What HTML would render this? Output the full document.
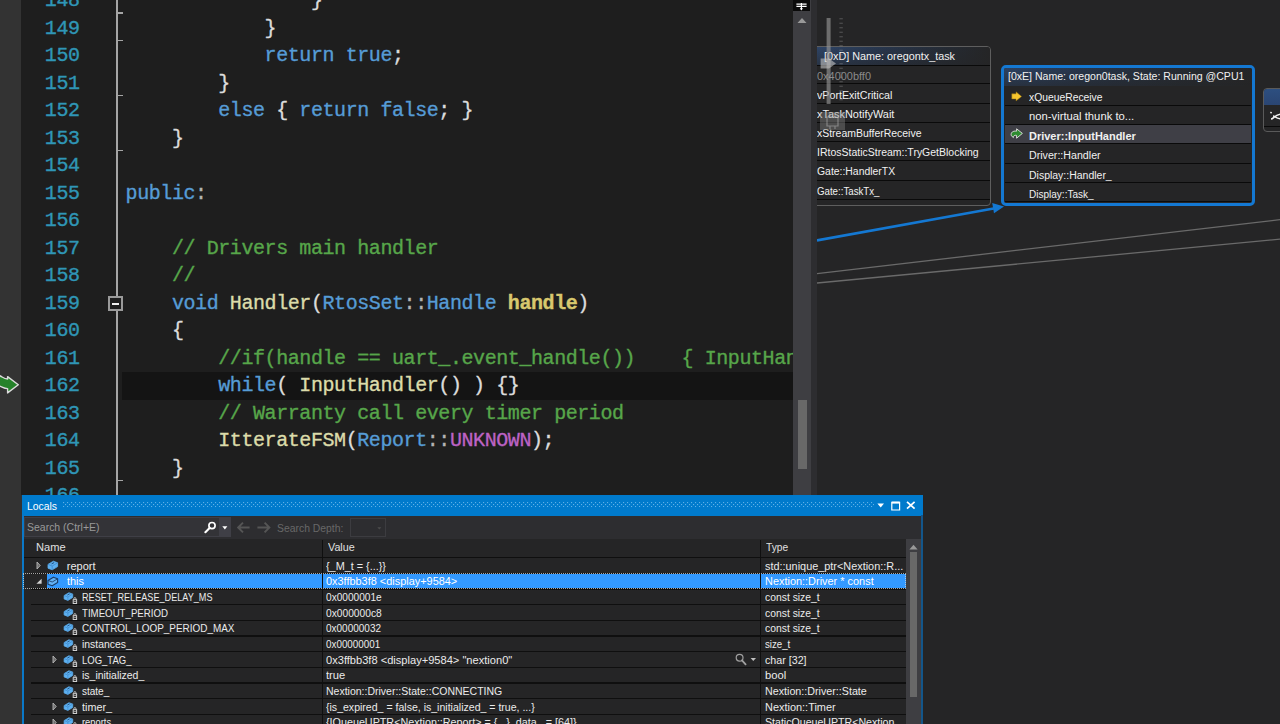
<!DOCTYPE html>
<html lang="en">
<head>
<meta charset="utf-8">
<title>Driver.h (Debugging) - Visual Studio</title>
<style>
*{margin:0;padding:0;box-sizing:border-box}
html,body{width:1280px;height:724px;overflow:hidden;background:#1e1e1e}
body{position:relative;font-family:"Liberation Sans",sans-serif;color:#dcdcdc}
.abs{position:absolute}
/* ---------- editor ---------- */
#gutter{left:0;top:0;width:21px;height:724px;background:#333333}
#gutter2{left:21px;top:494.5px;width:1px;height:230px;background:#333333}
#editor{left:21px;top:0;width:772px;height:495px;background:#1e1e1e;overflow:hidden}
.ln,.cl{position:absolute;height:27.5px;line-height:27.5px;font-family:"Liberation Mono",monospace;font-size:20px;letter-spacing:-0.42px;white-space:pre;-webkit-text-stroke:0.35px currentColor}
.ln{left:0;width:58.6px;text-align:right;color:#2f96b6}
.cl{left:104.6px;color:#dcdcdc}
.k{color:#569cd6}.c{color:#57a64a}.f{color:#dcdcaa}.t{color:#569cd6}.o{color:#b4b4b4}
.p{color:#d8c86e;font-weight:bold}.e{color:#bd63c5}
#curline{left:101px;top:372px;width:671px;height:27.5px;background:#141414}
#foldline{left:95px;top:0;width:2px;height:495px;background:#a5a5a5}
.tick{position:absolute;left:95px;width:7px;height:1.5px;background:#a5a5a5}
#foldbox{left:87px;top:296px;width:15px;height:15px;border:2px solid #9a9a9a;background:#1e1e1e}
#foldbox i{position:absolute;left:2px;top:4.5px;width:7px;height:2px;background:#f0f0f0}
#dbgarrow{left:0;top:374px}
/* ---------- editor scrollbar ---------- */
#vsb{left:793px;top:0;width:18px;height:495px;background:#3e3e42}
#vsb .split{position:absolute;left:0;top:0;width:17px;height:11px;background:#0a0a0a}
#vsb .thumb{position:absolute;left:4.5px;top:400px;width:9px;height:69px;background:#686868}
#gap{left:811px;top:0;width:6px;height:495px;background:#2d2d30}
/* ---------- parallel stacks ---------- */
#ps{left:817px;top:0;width:463px;height:724px;background:#252526;overflow:hidden}
#ps>svg{position:absolute;left:0;top:0}
.box{position:absolute;color:#f1f1f1;white-space:nowrap}
.ps{font-size:11.7px;display:inline-block;transform-origin:0 50%;white-space:pre}
.psb{font-weight:bold}
.row{position:absolute;left:0;right:0;border-bottom:1.4px solid #0a0a0a;overflow:hidden}
.hdr{position:absolute;left:0;right:0;line-height:18px;overflow:hidden}
#b1{left:-6px;top:46px;width:180px;height:160px;border:1.7px solid #5e5e5e;border-radius:4px;background:#252526;overflow:hidden}
#b1 .hdr{top:0;height:18.7px;line-height:15.4px;background:linear-gradient(180deg,rgba(37,37,38,0) 0%,rgba(37,37,38,.5) 100%),linear-gradient(90deg,#2e4568 0%,#28374f 35%,#252b34 75%,#252526 100%);border-bottom:1.4px solid #0a0a0a;padding-left:12px}
#b1 .row{padding-left:4.6px}
#b2{left:183.5px;top:65px;width:254.5px;height:141px;border:3px solid #1478d2;border-radius:5px;background:#252526;overflow:hidden}
#b2 .hdr{top:0;height:17.7px;line-height:14.8px;background:linear-gradient(180deg,rgba(37,37,38,0) 0%,rgba(37,37,38,.55) 100%),linear-gradient(90deg,#2c4263 0%,#27364c 30%,#252b33 70%,#252526 100%);padding-left:4.1px}
#b2 .row{padding-left:24.2px;left:1px;right:1px}
#b2 .row.cur{background:#3f3f46}
#b2 svg.mk{position:absolute}
#b3{left:446.4px;top:88px;width:40px;height:44px;border:1.5px solid #5a5a5a;border-radius:4px;background:#252526;overflow:hidden}
#b3 .hdr{top:0;height:16px;background:linear-gradient(180deg,#2d4f80,#2a4572)}
#zoomctl{left:0;top:0}
/* ---------- locals ---------- */
#locals{left:22px;top:495px;width:901px;height:230px;background:#2d2d30;overflow:hidden}
#ltitle{left:0;top:0;width:901px;height:20.7px;background:#007acc;color:#fff;font-size:11px;line-height:23px}
#ltitle .dots{position:absolute;left:40.5px;top:7.2px}
#lborderL{left:0;top:20.4px;width:1.5px;height:209px;background:#0a78c8}
#lborderR{left:898.7px;top:20.4px;width:2.2px;height:209px;background:#13568a}
.lt,.lt12{font-size:11px;display:inline-block;transform-origin:0 50%;white-space:pre}
#lsearch{left:2px;top:21.7px;width:206.5px;height:19.9px;background:#333337;border:1px solid #3f3f46;color:#999;font-size:11px;line-height:19px}
#lsearch .dd{position:absolute;right:0;top:0;width:11px;height:18px;background:#3f3f46}
#lhead{left:1.5px;top:43.8px;width:882.2px;height:19.4px;background:#252526;color:#e0e0e0;font-size:11px;line-height:16.6px;border-bottom:1.2px solid #0f0f0f}
#lgrid{left:1.5px;top:63.2px;width:882.2px;height:170px;background:#252526}
.lr{position:absolute;left:1.5px;width:882.2px;color:#ebebeb;line-height:17.4px;font-size:11px}
.lr::after{content:"";position:absolute;left:7.5px;right:0;bottom:-0.6px;height:1.2px;background:#0f0f0f}
.lr.sel::before{content:"";position:absolute;left:23.5px;right:0;top:0.4px;bottom:0.6px;background:#3399ff}
.lr.sel{color:#fff}
.ct{position:absolute;top:0;white-space:nowrap;margin-left:-1.5px}
.icw,.exw{position:absolute;margin-left:-1.5px;line-height:0}
.vsep{position:absolute;top:44.5px;width:1.3px;height:190px;background:#0f0f0f}
#lsb{left:883.7px;top:43.8px;width:14.9px;height:190px;background:#3e3e42}
#lsb .th{position:absolute;left:3.9px;top:13.5px;width:7.9px;height:145px;background:#686868}
#focus{left:1px;top:78.1px;width:883px;height:16.2px;border:1px dotted #d8d8d8;opacity:.75}

</style>
</head>
<body>
<div id="gutter" class="abs"></div><div id="gutter2" class="abs"></div>
<div id="editor" class="abs">
<div id="curline" class="abs"></div>
<div id="foldline" class="abs"></div>
<div id="code">
<div class="ln" style="top:-12.6px">148</div>
<div class="cl" style="top:-12.6px">                }</div>
<div class="ln" style="top:14.9px">149</div>
<div class="cl" style="top:14.9px">            }</div>
<div class="ln" style="top:42.4px">150</div>
<div class="cl" style="top:42.4px">            <span class="k">return</span> <span class="k">true</span>;</div>
<div class="ln" style="top:69.9px">151</div>
<div class="cl" style="top:69.9px">        }</div>
<div class="ln" style="top:97.4px">152</div>
<div class="cl" style="top:97.4px">        <span class="k">else</span> { <span class="k">return</span> <span class="k">false</span>; }</div>
<div class="ln" style="top:124.9px">153</div>
<div class="cl" style="top:124.9px">    }</div>
<div class="ln" style="top:152.4px">154</div>
<div class="ln" style="top:179.9px">155</div>
<div class="cl" style="top:179.9px"><span class="k">public</span><span class="o">:</span></div>
<div class="ln" style="top:207.4px">156</div>
<div class="ln" style="top:234.9px">157</div>
<div class="cl" style="top:234.9px">    <span class="c">// Drivers main handler</span></div>
<div class="ln" style="top:262.4px">158</div>
<div class="cl" style="top:262.4px">    <span class="c">//</span></div>
<div class="ln" style="top:289.9px">159</div>
<div class="cl" style="top:289.9px">    <span class="k">void</span> <span class="f">Handler</span>(<span class="t">RtosSet</span><span class="o">::</span><span class="t">Handle</span> <span class="p">handle</span>)</div>
<div class="ln" style="top:317.4px">160</div>
<div class="cl" style="top:317.4px">    {</div>
<div class="ln" style="top:344.9px">161</div>
<div class="cl" style="top:344.9px">        <span class="c">//if(handle == uart_.event_handle())    { InputHandler(); }</span></div>
<div class="ln" style="top:372.4px">162</div>
<div class="cl" style="top:372.4px">        <span class="k">while</span>( <span class="f">InputHandler</span>() ) {}</div>
<div class="ln" style="top:399.9px">163</div>
<div class="cl" style="top:399.9px">        <span class="c">// Warranty call every timer period</span></div>
<div class="ln" style="top:427.4px">164</div>
<div class="cl" style="top:427.4px">        <span class="f">ItterateFSM</span>(<span class="t">Report</span><span class="o">::</span><span class="e">UNKNOWN</span>);</div>
<div class="ln" style="top:454.9px">165</div>
<div class="cl" style="top:454.9px">    }</div>
<div class="ln" style="top:482.4px">166</div>
<div class="tick" style="top:12.25px"></div>
<div class="tick" style="top:39.75px"></div>
<div class="tick" style="top:94.75px"></div>
<div class="tick" style="top:149.75px"></div>
<div class="tick" style="top:479.75px"></div>
<div id="foldbox" class="abs"><i></i></div>
</div>
</div>
<svg id="dbgarrow" class="abs" width="21" height="21" viewBox="0 0 21 21">
<path d="M-2 1.4 C1.5 1.4 3 5 7.6 5 L7.6 2.6 L18.3 10.7 L7.6 18.9 L7.6 14.6 C3 14.6 1.5 11.8 -2 11.8 Z" fill="#25822a" stroke="#dcdcdc" stroke-width="1.4" stroke-linejoin="round"/>
</svg>
<div id="vsb" class="abs"><div class="split">
<svg width="18" height="11" viewBox="0 0 18 11"><path d="M3.4 1.2 H13.6 M3.4 3.3 H13.6 M8.4 0 V6.4" stroke="#fff" stroke-width="1.2" fill="none"/><path d="M6.8 5.2 H10 L8.4 7.6 Z" fill="#fff"/></svg>
</div>
<svg class="abs" style="left:4px;top:17px" width="10" height="7" viewBox="0 0 10 7"><path d="M0.5 6 L5 1 L9.5 6 Z" fill="#999"/></svg>
<div class="thumb"></div></div>
<div id="gap" class="abs"></div>

<div id="ps" class="abs">
<svg width="463" height="724" viewBox="817 0 463 724">
<line x1="817" y1="273.6" x2="1280" y2="219.7" stroke="#6a6a6a" stroke-width="1.3"/>
<line x1="817" y1="283" x2="1280" y2="239.2" stroke="#6a6a6a" stroke-width="1.3"/>
<line x1="817" y1="240.4" x2="995" y2="208.2" stroke="#1478d2" stroke-width="2.6"/>
<polygon points="1004,206.5 992.2,203 994,213.3" fill="#1478d2"/>
</svg>
<div id="b1" class="box">
<div class="hdr"><span class="ps" style="transform:scaleX(0.9250);">[0xD] Name: oregontx_task</span></div>
<div class="row" style="top:18.70px;height:18.80px;line-height:18.00px;color:#8a8a8a"><span class="ps" style="transform:scaleX(0.9368);">0x4000bff0</span></div>
<div class="row" style="top:37.50px;height:19.15px;line-height:18.35px;"><span class="ps" style="transform:scaleX(0.9129);">vPortExitCritical</span></div>
<div class="row" style="top:56.65px;height:19.05px;line-height:18.25px;"><span class="ps" style="transform:scaleX(0.9359);">xTaskNotifyWait</span></div>
<div class="row" style="top:75.70px;height:19.40px;line-height:18.60px;"><span class="ps" style="transform:scaleX(0.8953);">xStreamBufferReceive</span></div>
<div class="row" style="top:95.10px;height:19.20px;line-height:18.40px;"><span class="ps" style="transform:scaleX(0.8976);">IRtosStaticStream::TryGetBlocking</span></div>
<div class="row" style="top:114.30px;height:19.40px;line-height:18.60px;"><span class="ps" style="transform:scaleX(0.8905);">Gate::HandlerTX</span></div>
<div class="row" style="top:133.70px;height:19.20px;line-height:18.40px;"><span class="ps" style="transform:scaleX(0.8294);">Gate::TaskTx_</span></div>
</div>
<div id="b2" class="box">
<div class="hdr"><span class="ps" style="transform:scaleX(0.9023);">[0xE] Name: oregon0task, State: Running @CPU1</span></div>
<div class="row" style="top:17.70px;height:20.25px;line-height:20.35px;"><span class="ps" style="transform:scaleX(0.8837);">xQueueReceive</span></div>
<div class="row" style="top:37.95px;height:18.85px;line-height:18.95px;"><span class="ps" style="transform:scaleX(0.9638);">non-virtual thunk to...</span></div>
<div class="row cur" style="top:56.80px;height:19.00px;line-height:19.10px;"><span class="ps psb" style="transform:scaleX(0.9398);">Driver::InputHandler</span></div>
<div class="row" style="top:75.80px;height:20.00px;line-height:20.10px;"><span class="ps" style="transform:scaleX(0.9110);">Driver::Handler</span></div>
<div class="row" style="top:95.80px;height:19.15px;line-height:19.25px;"><span class="ps" style="transform:scaleX(0.8965);">Display::Handler_</span></div>
<div class="row" style="top:114.95px;height:19.25px;line-height:19.35px;"><span class="ps" style="transform:scaleX(0.8572);">Display::Task_</span></div>
<svg class="mk" style="left:7px;top:23px" width="12" height="11" viewBox="0 0 12 11"><path d="M0.8 2.8 H5 V0.8 L10.6 5.4 L5 10 V8 H0.8 Z" fill="#f6c52e" stroke="#8a6a10" stroke-width="0.5" stroke-linejoin="round"/></svg>
<svg class="mk" style="left:6px;top:60px" width="14" height="13" viewBox="0 0 14 13"><path d="M1.2 7.6 C0.6 4.4 3 2.6 6.6 3.2 L6.6 0.8 L12.4 5.4 L6.6 10.2 L6.6 7.4 C4.6 7 3.4 7.6 3.4 9.6 Z" fill="#2e8b30" stroke="#d8d8d8" stroke-width="1" stroke-linejoin="round"/></svg>
</div>
<div id="b3" class="box"><div class="hdr"></div><div class="row" style="top:16px;height:21.5px"></div>
<svg class="abs" style="left:5.6px;top:21.6px" width="12" height="12" viewBox="0 0 12 12"><path d="M0.4 1.2 L1.6 2.2 M1 8 C4 8 4.4 3 12 3 M3 5 C5 5 6 8 12 8" stroke="#f4f4f4" stroke-width="1.5" fill="none"/></svg>
</div>
<svg id="zoomctl" class="abs" width="40" height="140" viewBox="817 0 40 140">
<rect x="826.6" y="18" width="4" height="86" fill="#9a9a9a" opacity=".62"/>
<g fill="#b0b0b0" opacity=".32"><rect x="839.4" y="18.2" width="3.4" height="1.1"/><rect x="839.4" y="22.7" width="3.4" height="1.1"/><rect x="839.4" y="27.2" width="3.4" height="1.1"/><rect x="839.4" y="31.7" width="3.4" height="1.1"/><rect x="839.4" y="36.2" width="3.4" height="1.1"/><rect x="839.4" y="40.7" width="3.4" height="1.1"/><rect x="839.4" y="45.2" width="3.4" height="1.1"/><rect x="839.4" y="49.7" width="3.4" height="1.1"/><rect x="839.4" y="54.2" width="3.4" height="1.1"/><rect x="839.4" y="58.7" width="3.4" height="1.1"/><rect x="839.4" y="63.2" width="3.4" height="1.1"/><rect x="839.4" y="67.7" width="3.4" height="1.1"/><rect x="839.4" y="72.2" width="3.4" height="1.1"/><rect x="839.4" y="76.7" width="3.4" height="1.1"/><rect x="839.4" y="81.2" width="3.4" height="1.1"/><rect x="839.4" y="85.7" width="3.4" height="1.1"/><rect x="839.4" y="90.2" width="3.4" height="1.1"/><rect x="839.4" y="94.7" width="3.4" height="1.1"/><rect x="839.4" y="99.2" width="3.4" height="1.1"/></g>
<path d="M820.6 58.6 H829 L836 63.6 L829 68.6 H820.6 Z" fill="#c4c4c4" opacity=".6"/>
<rect x="820" y="112" width="25" height="18" fill="#8a8a8a" opacity=".4"/>
<path d="M827 117 H838 V126 H827 Z M830 117 V114 M835 117 V114 M830 126 V129 M835 126 V129" stroke="#d8d8d8" stroke-width="1.2" fill="none" opacity=".4"/>
</svg>
</div>

<div id="locals" class="abs">
<div id="ltitle" class="abs"><span class="ct" style="left:5.2px;margin:0"><span class="lt" style="transform:scaleX(0.9435);">Locals</span></span><svg class="dots" width="811" height="6" viewBox="0 0 811 6"><defs><pattern id="dp" width="4" height="4" patternUnits="userSpaceOnUse"><rect x="0" y="0" width="1.1" height="1.1" fill="#5fb0e8"/><rect x="2" y="2" width="1.1" height="1.1" fill="#5fb0e8"/></pattern></defs><rect width="811" height="5.2" fill="url(#dp)"/></svg>
<svg class="abs" style="left:855px;top:8px" width="8" height="5" viewBox="0 0 8 5"><path d="M0.4 0.4 H7 L3.7 4.4 Z" fill="#fff"/></svg>
<svg class="abs" style="left:868.6px;top:6px" width="10" height="10" viewBox="0 0 10 10"><path d="M0.8 1.4 H8.6 V9 H0.8 Z" fill="none" stroke="#fff" stroke-width="1.2"/><path d="M0.8 1.6 H8.6" stroke="#fff" stroke-width="2"/></svg>
<svg class="abs" style="left:884.4px;top:6.2px" width="10" height="9" viewBox="0 0 10 9"><path d="M1 0.8 L8.6 7.6 M8.6 0.8 L1 7.6" stroke="#fff" stroke-width="1.7"/></svg>
</div>
<div id="lborderL" class="abs"></div><div id="lborderR" class="abs"></div>
<div id="lsearch" class="abs"><span class="ct" style="left:1.8px;margin:0"><span class="lt" style="transform:scaleX(0.9526);">Search (Ctrl+E)</span></span>
<svg class="abs" style="left:179px;top:3.2px" width="13" height="13" viewBox="0 0 13 13"><circle cx="8" cy="4.6" r="3.1" fill="none" stroke="#fff" stroke-width="1.7"/><path d="M5.6 7 L1.4 11.2" stroke="#fff" stroke-width="2.1" stroke-linecap="round"/></svg>
<div class="dd"><svg class="abs" style="left:3px;top:8px" width="6" height="4" viewBox="0 0 6 4"><path d="M0.3 0.3 H5.4 L2.85 3.4 Z" fill="#fff"/></svg></div>
</div>
<svg class="abs" style="left:215px;top:25.5px" width="34" height="13" viewBox="0 0 34 13"><path d="M12.6 6.5 H1.4 M6 1.6 L1.2 6.5 L6 11.4" stroke="#555" stroke-width="1.9" fill="none"/><path d="M20.4 6.5 H32.2 M27.6 1.6 L32.4 6.5 L27.6 11.4" stroke="#555" stroke-width="1.9" fill="none"/></svg>
<span class="ct" style="left:255px;top:23.5px;margin:0;color:#686868;font-size:11px;line-height:18px"><span class="lt" style="transform:scaleX(0.9441);">Search Depth:</span></span>
<div class="abs" style="left:328px;top:23px;width:35.5px;height:18.5px;border:1px solid #3c3c40;background:#2d2d30"><svg class="abs" style="left:26px;top:7.5px" width="5" height="3" viewBox="0 0 5 3"><path d="M0.3 0.3 H4.4 L2.35 2.6 Z" fill="#4c4c4c"/></svg></div>
<div id="lhead" class="abs"><span class="ct" style="left:12.5px;margin:0"><span class="lt" style="transform:scaleX(1.0087);">Name</span></span><span class="ct" style="left:304px;margin:0"><span class="lt" style="transform:scaleX(0.9788);">Value</span></span><span class="ct" style="left:742.2px;margin:0"><span class="lt" style="transform:scaleX(0.9263);">Type</span></span></div>
<div id="lgrid" class="abs"></div>
<div class="lr" style="top:62.60px;height:15.68px"><span class="exw" style="left:14.2px;top:3.5px"><svg class="ex" width="6" height="9" viewBox="0 0 6 9"><path d="M1 1 L4.2 4.5 L1 8 Z" fill="#6a6a6a" stroke="#b8b8b8" stroke-width="0.9"/></svg></span><span class="icw" style="left:25px;top:2.5px"><svg class="ic" width="12" height="11" viewBox="0 0 12 11"><path d="M1 4.4 L6.4 1.2 L10.6 2.8 L10.6 6.6 L5.2 9.8 L1 8.2 Z" fill="#5db0f0" stroke="#5db0f0" stroke-width="0.8" stroke-linejoin="round"/><path d="M1 4.4 L5.2 6 L10.6 2.8 M5.2 6 L5.2 9.8" stroke="#3f88cc" stroke-width="0.8" fill="none"/><path d="M4.6 3.9 L7.2 2.5" stroke="#1f4e80" stroke-width="1" fill="none"/></svg></span><span class="ct" style="left:44.75px"><span class="lt" style="transform:scaleX(1.0000);">report</span></span><span class="ct" style="left:304.25px"><span class="lt" style="transform:scaleX(0.9859);">{_M_t = {...}}</span></span><span class="ct" style="left:742.7px"><span class="lt" style="transform:scaleX(0.9891);">std::unique_ptr&lt;Nextion::R...</span></span></div>
<div class="lr sel" style="top:78.28px;height:15.68px"><span class="exw" style="left:13.6px;top:5px"><svg class="ex" width="7" height="7" viewBox="0 0 7 7"><path d="M5.6 0.8 L5.6 5.8 L0.4 5.8 Z" fill="#d0d0d0"/></svg></span><span class="icw" style="left:25px;top:2.5px"><svg class="ic" width="12" height="11" viewBox="0 0 12 11"><path d="M1 4.4 L6.4 1.2 L10.6 2.8 L10.6 6.6 L5.2 9.8 L1 8.2 Z" fill="#63b2f6" stroke="#1c3f6a" stroke-width="1.2" stroke-linejoin="round"/><path d="M1 4.4 L5.2 6 L10.6 2.8" stroke="#1c3f6a" stroke-width="0.9" fill="none"/></svg></span><span class="ct" style="left:44.75px"><span class="lt" style="transform:scaleX(0.9927);">this</span></span><span class="ct" style="left:304.25px"><span class="lt" style="transform:scaleX(0.9927);">0x3ffbb3f8 &lt;display+9584&gt;</span></span><span class="ct" style="left:742.7px"><span class="lt" style="transform:scaleX(0.9933);">Nextion::Driver * const</span></span></div>
<div class="lr" style="top:93.96px;height:15.68px"><span class="icw" style="left:40.8px;top:2px"><svg class="ic" width="15" height="14" viewBox="0 0 15 14"><g transform="translate(0.2,0.6) scale(0.9)"><path d="M1 4.4 L6.4 1.2 L10.6 2.8 L10.6 6.6 L5.2 9.8 L1 8.2 Z" fill="#5db0f0" stroke="#5db0f0" stroke-width="0.8" stroke-linejoin="round"/><path d="M1 4.4 L5.2 6 L10.6 2.8 M5.2 6 L5.2 9.8" stroke="#3f88cc" stroke-width="0.8" fill="none"/><path d="M4.6 3.9 L7.2 2.5" stroke="#1f4e80" stroke-width="1" fill="none"/></g><rect x="9" y="7.2" width="5.4" height="6" fill="#252526"/><rect x="10.2" y="8.7" width="3.4" height="3.8" fill="none" stroke="#d0d0d0" stroke-width="1"/><path d="M10.9 8.6 V7.6 a1 1 0 0 1 2 0 V8.6" fill="none" stroke="#d0d0d0" stroke-width="0.9"/><path d="M10.6 10.6 H13.2" stroke="#d0d0d0" stroke-width="0.7"/></svg></span><span class="ct" style="left:60px"><span class="lt" style="transform:scaleX(0.8284);">RESET_RELEASE_DELAY_MS</span></span><span class="ct" style="left:304.25px"><span class="lt" style="transform:scaleX(0.9205);">0x0000001e</span></span><span class="ct" style="left:742.7px"><span class="lt" style="transform:scaleX(0.9416);">const size_t</span></span></div>
<div class="lr" style="top:109.64px;height:15.68px"><span class="icw" style="left:40.8px;top:2px"><svg class="ic" width="15" height="14" viewBox="0 0 15 14"><g transform="translate(0.2,0.6) scale(0.9)"><path d="M1 4.4 L6.4 1.2 L10.6 2.8 L10.6 6.6 L5.2 9.8 L1 8.2 Z" fill="#5db0f0" stroke="#5db0f0" stroke-width="0.8" stroke-linejoin="round"/><path d="M1 4.4 L5.2 6 L10.6 2.8 M5.2 6 L5.2 9.8" stroke="#3f88cc" stroke-width="0.8" fill="none"/><path d="M4.6 3.9 L7.2 2.5" stroke="#1f4e80" stroke-width="1" fill="none"/></g><rect x="9" y="7.2" width="5.4" height="6" fill="#252526"/><rect x="10.2" y="8.7" width="3.4" height="3.8" fill="none" stroke="#d0d0d0" stroke-width="1"/><path d="M10.9 8.6 V7.6 a1 1 0 0 1 2 0 V8.6" fill="none" stroke="#d0d0d0" stroke-width="0.9"/><path d="M10.6 10.6 H13.2" stroke="#d0d0d0" stroke-width="0.7"/></svg></span><span class="ct" style="left:60px"><span class="lt" style="transform:scaleX(0.8794);">TIMEOUT_PERIOD</span></span><span class="ct" style="left:304.25px"><span class="lt" style="transform:scaleX(0.9299);">0x000000c8</span></span><span class="ct" style="left:742.7px"><span class="lt" style="transform:scaleX(0.9416);">const size_t</span></span></div>
<div class="lr" style="top:125.32px;height:15.68px"><span class="icw" style="left:40.8px;top:2px"><svg class="ic" width="15" height="14" viewBox="0 0 15 14"><g transform="translate(0.2,0.6) scale(0.9)"><path d="M1 4.4 L6.4 1.2 L10.6 2.8 L10.6 6.6 L5.2 9.8 L1 8.2 Z" fill="#5db0f0" stroke="#5db0f0" stroke-width="0.8" stroke-linejoin="round"/><path d="M1 4.4 L5.2 6 L10.6 2.8 M5.2 6 L5.2 9.8" stroke="#3f88cc" stroke-width="0.8" fill="none"/><path d="M4.6 3.9 L7.2 2.5" stroke="#1f4e80" stroke-width="1" fill="none"/></g><rect x="9" y="7.2" width="5.4" height="6" fill="#252526"/><rect x="10.2" y="8.7" width="3.4" height="3.8" fill="none" stroke="#d0d0d0" stroke-width="1"/><path d="M10.9 8.6 V7.6 a1 1 0 0 1 2 0 V8.6" fill="none" stroke="#d0d0d0" stroke-width="0.9"/><path d="M10.6 10.6 H13.2" stroke="#d0d0d0" stroke-width="0.7"/></svg></span><span class="ct" style="left:60px"><span class="lt" style="transform:scaleX(0.9039);">CONTROL_LOOP_PERIOD_MAX</span></span><span class="ct" style="left:304.25px"><span class="lt" style="transform:scaleX(0.9082);">0x00000032</span></span><span class="ct" style="left:742.7px"><span class="lt" style="transform:scaleX(0.9416);">const size_t</span></span></div>
<div class="lr" style="top:141.00px;height:15.68px"><span class="icw" style="left:40.8px;top:2px"><svg class="ic" width="15" height="14" viewBox="0 0 15 14"><g transform="translate(0.2,0.6) scale(0.9)"><path d="M1 4.4 L6.4 1.2 L10.6 2.8 L10.6 6.6 L5.2 9.8 L1 8.2 Z" fill="#5db0f0" stroke="#5db0f0" stroke-width="0.8" stroke-linejoin="round"/><path d="M1 4.4 L5.2 6 L10.6 2.8 M5.2 6 L5.2 9.8" stroke="#3f88cc" stroke-width="0.8" fill="none"/><path d="M4.6 3.9 L7.2 2.5" stroke="#1f4e80" stroke-width="1" fill="none"/></g><rect x="9" y="7.2" width="5.4" height="6" fill="#252526"/><rect x="10.2" y="8.7" width="3.4" height="3.8" fill="none" stroke="#d0d0d0" stroke-width="1"/><path d="M10.9 8.6 V7.6 a1 1 0 0 1 2 0 V8.6" fill="none" stroke="#d0d0d0" stroke-width="0.9"/><path d="M10.6 10.6 H13.2" stroke="#d0d0d0" stroke-width="0.7"/></svg></span><span class="ct" style="left:60px"><span class="lt" style="transform:scaleX(0.9459);">instances_</span></span><span class="ct" style="left:304.25px"><span class="lt" style="transform:scaleX(0.8958);">0x00000001</span></span><span class="ct" style="left:742.7px"><span class="lt" style="transform:scaleX(0.8800);">size_t</span></span></div>
<div class="lr" style="top:156.68px;height:15.68px"><span class="exw" style="left:30.2px;top:3.5px"><svg class="ex" width="6" height="9" viewBox="0 0 6 9"><path d="M1 1 L4.2 4.5 L1 8 Z" fill="#6a6a6a" stroke="#b8b8b8" stroke-width="0.9"/></svg></span><span class="icw" style="left:40.8px;top:2px"><svg class="ic" width="15" height="14" viewBox="0 0 15 14"><g transform="translate(0.2,0.6) scale(0.9)"><path d="M1 4.4 L6.4 1.2 L10.6 2.8 L10.6 6.6 L5.2 9.8 L1 8.2 Z" fill="#5db0f0" stroke="#5db0f0" stroke-width="0.8" stroke-linejoin="round"/><path d="M1 4.4 L5.2 6 L10.6 2.8 M5.2 6 L5.2 9.8" stroke="#3f88cc" stroke-width="0.8" fill="none"/><path d="M4.6 3.9 L7.2 2.5" stroke="#1f4e80" stroke-width="1" fill="none"/></g><rect x="9" y="7.2" width="5.4" height="6" fill="#252526"/><rect x="10.2" y="8.7" width="3.4" height="3.8" fill="none" stroke="#d0d0d0" stroke-width="1"/><path d="M10.9 8.6 V7.6 a1 1 0 0 1 2 0 V8.6" fill="none" stroke="#d0d0d0" stroke-width="0.9"/><path d="M10.6 10.6 H13.2" stroke="#d0d0d0" stroke-width="0.7"/></svg></span><span class="ct" style="left:60px"><span class="lt" style="transform:scaleX(0.8644);">LOG_TAG_</span></span><span class="ct" style="left:304.25px"><span class="lt" style="transform:scaleX(1.0085);">0x3ffbb3f8 &lt;display+9584&gt; "nextion0"</span></span><span class="ct" style="left:742.7px"><span class="lt" style="transform:scaleX(0.9717);">char [32]</span></span></div>
<div class="lr" style="top:172.36px;height:15.68px"><span class="icw" style="left:40.8px;top:2px"><svg class="ic" width="15" height="14" viewBox="0 0 15 14"><g transform="translate(0.2,0.6) scale(0.9)"><path d="M1 4.4 L6.4 1.2 L10.6 2.8 L10.6 6.6 L5.2 9.8 L1 8.2 Z" fill="#5db0f0" stroke="#5db0f0" stroke-width="0.8" stroke-linejoin="round"/><path d="M1 4.4 L5.2 6 L10.6 2.8 M5.2 6 L5.2 9.8" stroke="#3f88cc" stroke-width="0.8" fill="none"/><path d="M4.6 3.9 L7.2 2.5" stroke="#1f4e80" stroke-width="1" fill="none"/></g><rect x="9" y="7.2" width="5.4" height="6" fill="#252526"/><rect x="10.2" y="8.7" width="3.4" height="3.8" fill="none" stroke="#d0d0d0" stroke-width="1"/><path d="M10.9 8.6 V7.6 a1 1 0 0 1 2 0 V8.6" fill="none" stroke="#d0d0d0" stroke-width="0.9"/><path d="M10.6 10.6 H13.2" stroke="#d0d0d0" stroke-width="0.7"/></svg></span><span class="ct" style="left:60px"><span class="lt" style="transform:scaleX(0.9513);">is_initialized_</span></span><span class="ct" style="left:304.25px"><span class="lt" style="transform:scaleX(1.0148);">true</span></span><span class="ct" style="left:742.7px"><span class="lt" style="transform:scaleX(1.0194);">bool</span></span></div>
<div class="lr" style="top:188.04px;height:15.68px"><span class="icw" style="left:40.8px;top:2px"><svg class="ic" width="15" height="14" viewBox="0 0 15 14"><g transform="translate(0.2,0.6) scale(0.9)"><path d="M1 4.4 L6.4 1.2 L10.6 2.8 L10.6 6.6 L5.2 9.8 L1 8.2 Z" fill="#5db0f0" stroke="#5db0f0" stroke-width="0.8" stroke-linejoin="round"/><path d="M1 4.4 L5.2 6 L10.6 2.8 M5.2 6 L5.2 9.8" stroke="#3f88cc" stroke-width="0.8" fill="none"/><path d="M4.6 3.9 L7.2 2.5" stroke="#1f4e80" stroke-width="1" fill="none"/></g><rect x="9" y="7.2" width="5.4" height="6" fill="#252526"/><rect x="10.2" y="8.7" width="3.4" height="3.8" fill="none" stroke="#d0d0d0" stroke-width="1"/><path d="M10.9 8.6 V7.6 a1 1 0 0 1 2 0 V8.6" fill="none" stroke="#d0d0d0" stroke-width="0.9"/><path d="M10.6 10.6 H13.2" stroke="#d0d0d0" stroke-width="0.7"/></svg></span><span class="ct" style="left:60px"><span class="lt" style="transform:scaleX(0.9093);">state_</span></span><span class="ct" style="left:304.25px"><span class="lt" style="transform:scaleX(0.9548);">Nextion::Driver::State::CONNECTING</span></span><span class="ct" style="left:742.7px"><span class="lt" style="transform:scaleX(0.9737);">Nextion::Driver::State</span></span></div>
<div class="lr" style="top:203.72px;height:15.68px"><span class="exw" style="left:30.2px;top:3.5px"><svg class="ex" width="6" height="9" viewBox="0 0 6 9"><path d="M1 1 L4.2 4.5 L1 8 Z" fill="#6a6a6a" stroke="#b8b8b8" stroke-width="0.9"/></svg></span><span class="icw" style="left:40.8px;top:2px"><svg class="ic" width="15" height="14" viewBox="0 0 15 14"><g transform="translate(0.2,0.6) scale(0.9)"><path d="M1 4.4 L6.4 1.2 L10.6 2.8 L10.6 6.6 L5.2 9.8 L1 8.2 Z" fill="#5db0f0" stroke="#5db0f0" stroke-width="0.8" stroke-linejoin="round"/><path d="M1 4.4 L5.2 6 L10.6 2.8 M5.2 6 L5.2 9.8" stroke="#3f88cc" stroke-width="0.8" fill="none"/><path d="M4.6 3.9 L7.2 2.5" stroke="#1f4e80" stroke-width="1" fill="none"/></g><rect x="9" y="7.2" width="5.4" height="6" fill="#252526"/><rect x="10.2" y="8.7" width="3.4" height="3.8" fill="none" stroke="#d0d0d0" stroke-width="1"/><path d="M10.9 8.6 V7.6 a1 1 0 0 1 2 0 V8.6" fill="none" stroke="#d0d0d0" stroke-width="0.9"/><path d="M10.6 10.6 H13.2" stroke="#d0d0d0" stroke-width="0.7"/></svg></span><span class="ct" style="left:60px"><span class="lt" style="transform:scaleX(0.9816);">timer_</span></span><span class="ct" style="left:304.25px"><span class="lt" style="transform:scaleX(0.9589);">{is_expired_ = false, is_initialized_ = true, ...}</span></span><span class="ct" style="left:742.7px"><span class="lt" style="transform:scaleX(0.9942);">Nextion::Timer</span></span></div>
<div class="lr" style="top:219.40px;height:15.68px"><span class="exw" style="left:30.2px;top:3.5px"><svg class="ex" width="6" height="9" viewBox="0 0 6 9"><path d="M1 1 L4.2 4.5 L1 8 Z" fill="#6a6a6a" stroke="#b8b8b8" stroke-width="0.9"/></svg></span><span class="icw" style="left:40.8px;top:2px"><svg class="ic" width="15" height="14" viewBox="0 0 15 14"><g transform="translate(0.2,0.6) scale(0.9)"><path d="M1 4.4 L6.4 1.2 L10.6 2.8 L10.6 6.6 L5.2 9.8 L1 8.2 Z" fill="#5db0f0" stroke="#5db0f0" stroke-width="0.8" stroke-linejoin="round"/><path d="M1 4.4 L5.2 6 L10.6 2.8 M5.2 6 L5.2 9.8" stroke="#3f88cc" stroke-width="0.8" fill="none"/><path d="M4.6 3.9 L7.2 2.5" stroke="#1f4e80" stroke-width="1" fill="none"/></g><rect x="9" y="7.2" width="5.4" height="6" fill="#252526"/><rect x="10.2" y="8.7" width="3.4" height="3.8" fill="none" stroke="#d0d0d0" stroke-width="1"/><path d="M10.9 8.6 V7.6 a1 1 0 0 1 2 0 V8.6" fill="none" stroke="#d0d0d0" stroke-width="0.9"/><path d="M10.6 10.6 H13.2" stroke="#d0d0d0" stroke-width="0.7"/></svg></span><span class="ct" style="left:60px"><span class="lt" style="transform:scaleX(0.8486);">reports_</span></span><span class="ct" style="left:304.25px"><span class="lt" style="transform:scaleX(0.9776);">{IQueueUPTR&lt;Nextion::Report&gt; = {...}, data_ = [64]}</span></span><span class="ct" style="left:742.7px"><span class="lt" style="transform:scaleX(0.9642);">StaticQueueUPTR&lt;Nextion</span></span></div>
<div id="focus" class="abs"></div>
<div class="vsep" style="left:299.9px"></div><div class="vsep" style="left:737.8px"></div>
<div id="lsb" class="abs"><svg class="abs" style="left:3px;top:5.2px" width="9" height="6" viewBox="0 0 9 6"><path d="M0.4 5.4 L4.5 0.8 L8.6 5.4 Z" fill="#999"/></svg><div class="th"></div></div>
<svg class="abs" style="left:713px;top:158px" width="22" height="13" viewBox="0 0 22 13"><circle cx="4.6" cy="4.8" r="3.4" fill="none" stroke="#a0a0a0" stroke-width="1.2"/><path d="M7 7.4 L10.6 11.4" stroke="#a0a0a0" stroke-width="1.8" stroke-linecap="round"/><path d="M15.6 5 H21 L18.3 8 Z" fill="#c0c0c0"/></svg>
</div>
</body>
</html>
